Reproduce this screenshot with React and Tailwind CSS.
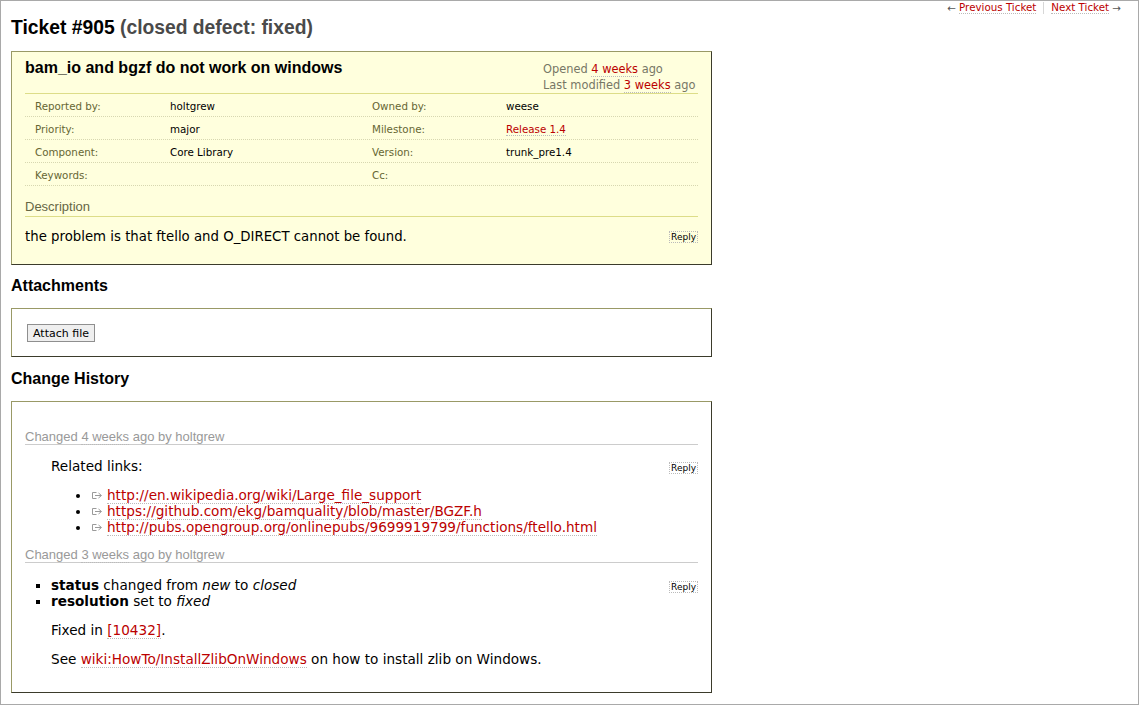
import React from 'react';

const VERDANA = "font-['DejaVu_Sans',Verdana,sans-serif]";
const ARIAL = "font-['Liberation_Sans',Arial,sans-serif]";

// small dotted-underline link, trac style
function TLink({ children, className = '' }) {
    return (
        <a href="#" className={`text-[#bb0000] no-underline border-b border-dotted border-[#bbbbbb] ${className}`}>
            {children}
        </a>
    );
}

function ExtIcon() {
    return (
        <svg width="13" height="9" viewBox="0 0 13 9" className="inline-block mr-[3px] align-baseline">
            <path d="M5.5 1.5H1.5V7.5H5.5" fill="none" stroke="#9a9a9a" strokeWidth="1" />
            <path d="M4 4.5H10M7.5 2L10.5 4.5L7.5 7" fill="none" stroke="#9a9a9a" strokeWidth="1" />
        </svg>
    );
}

function ReplyButton() {
    return (
        <div className={`w-fit text-[9px] leading-[10px] px-[1px] border border-dotted border-[#bbbbbb] text-black ${VERDANA}`}>
            Reply
        </div>
    );
}

const props = [
    ['Reported by:', 'holtgrew', 'Owned by:', 'weese'],
    ['Priority:', 'major', 'Milestone:', 'Release 1.4'],
    ['Component:', 'Core Library', 'Version:', 'trunk_pre1.4'],
    ['Keywords:', '', 'Cc:', ''],
];

const links = [
    'http://en.wikipedia.org/wiki/Large_file_support',
    'https://github.com/ekg/bamquality/blob/master/BGZF.h',
    'http://pubs.opengroup.org/onlinepubs/9699919799/functions/ftello.html',
];

function PropsTable() {
    return (
        <div className="text-[10.3px]">
            {props.map((row, i) => (
                <div key={i} className="flex h-[23px] items-center pt-[3px] pl-[10px] border-b border-dotted border-[#d7d7b0]">
                    <div className="w-[135px] text-[#666633]">{row[0]}</div>
                    <div className="w-[202px] text-black">{row[1]}</div>
                    <div className="w-[134px] text-[#666633]">{row[2]}</div>
                    <div className="flex-1 text-black">
                        {row[3] === 'Release 1.4' ? <TLink>{row[3]}</TLink> : row[3]}
                    </div>
                </div>
            ))}
        </div>
    );
}

function ChangeHeader({ when }) {
    return (
        <div className={`text-[13px] leading-[14px] text-[#999999] border-b border-[#cccccc] ${ARIAL}`}>
            Changed <span className="border-b border-dotted border-[#bbbbbb]">{when}</span> ago by holtgrew
        </div>
    );
}

export default function App() {
    return (
        <div className={`w-[1139px] h-[705px] border border-[#a9a9a9] bg-white text-black overflow-hidden ${VERDANA}`}>
            <div className="pl-[10px] pr-[17px]">
                {/* top row: title + ticket nav */}
                <div className="flex justify-between items-start">
                    <h1 className={`mt-[16px] text-[19.3px] leading-[22px] font-bold ${ARIAL}`}>
                        Ticket #905 <span className="text-[#4a4a4a]">(closed defect: fixed)</span>
                    </h1>
                    <div className="text-[10.3px] leading-[12px] flex items-center">
                        <span className="text-[#555]">←&nbsp;</span>
                        <TLink>Previous Ticket</TLink>
                        <span className="inline-block w-px h-[12px] bg-[#d7d7d7] mx-[7px]"></span>
                        <TLink>Next Ticket</TLink>
                        <span className="text-[#555]">&nbsp;→</span>
                    </div>
                </div>

                {/* ticket box */}
                <div className="mt-[12px] w-[701px] bg-[#ffffdd] border border-t-[#999966] border-l-[#999966] border-r-[#3b3b2b] border-b-[#3b3b2b] px-[13px] pt-[6px] pb-[19px]">
                    <div className="flex justify-between border-b border-[#dddd88]">
                        <h2 className={`text-[16px] leading-[20px] font-bold ${ARIAL}`}>
                            bam_io and bgzf do not work on windows
                        </h2>
                        <div className="text-[11.4px] leading-[16px] text-[#777766] w-[155px] pt-[3px]">
                            <div>Opened <TLink>4 weeks</TLink> ago</div>
                            <div>Last modified <TLink>3 weeks</TLink> ago</div>
                        </div>
                    </div>
                    <PropsTable />
                    <h3 className={`mt-[13px] text-[13px] leading-[16px] text-[#666644] border-b border-[#dddd88] pb-[1px] ${ARIAL}`}>
                        Description
                    </h3>
                    <div className="flex justify-between items-center mt-[12px]">
                        <p className="text-[13.3px] leading-[16px]">
                            the problem is that ftello and O_DIRECT cannot be found.
                        </p>
                        <ReplyButton />
                    </div>
                </div>

                {/* attachments */}
                <h2 className={`mt-[11px] text-[16px] leading-[20px] font-bold ${ARIAL}`}>Attachments</h2>
                <div className="mt-[12px] w-[701px] h-[49px] border border-t-[#999966] border-l-[#999966] border-r-[#3b3b2b] border-b-[#3b3b2b] pl-[15px] pt-[15px] flex items-start">
                    <button className={`text-[11px] leading-[15px] h-[18px] px-[5px] bg-[#efefef] border border-[#8f8f8f] ${VERDANA}`}>
                        Attach file
                    </button>
                </div>

                {/* change history */}
                <h2 className={`mt-[12px] text-[16px] leading-[20px] font-bold ${ARIAL}`}>Change History</h2>
                <div className="mt-[12px] w-[701px] h-[292px] border border-t-[#999966] border-l-[#999966] border-r-[#3b3b2b] border-b-[#3b3b2b] px-[13px] pt-[28px] text-[13.6px] leading-[16px]">
                    <ChangeHeader when="4 weeks" />
                    <div className="flex justify-between items-start mt-[13px]">
                        <p className="pl-[26px]">Related links:</p>
                        <div className="mt-[4px]"><ReplyButton /></div>
                    </div>
                    <ul className="mt-[13px] pl-[66px] list-disc marker:text-black">
                        {links.map((l) => (
                            <li key={l}>
                                <ExtIcon />
                                <TLink>{l}</TLink>
                            </li>
                        ))}
                    </ul>
                    <div className="mt-[13px]">
                        <ChangeHeader when="3 weeks" />
                    </div>
                    <div className="flex justify-between items-start mt-[14px]">
                        <ul className="pl-[26px] list-[square]">
                            <li><b>status</b> changed from <i>new</i> to <i>closed</i></li>
                            <li><b>resolution</b> set to <i>fixed</i></li>
                        </ul>
                        <div className="mt-[4px]"><ReplyButton /></div>
                    </div>
                    <p className="mt-[13px] pl-[26px]">
                        Fixed in <TLink>[10432]</TLink>.
                    </p>
                    <p className="mt-[13px] pl-[26px]">
                        See <TLink>wiki:HowTo/InstallZlibOnWindows</TLink> on how to install zlib on Windows.
                    </p>
                </div>
            </div>
        </div>
    );
}
